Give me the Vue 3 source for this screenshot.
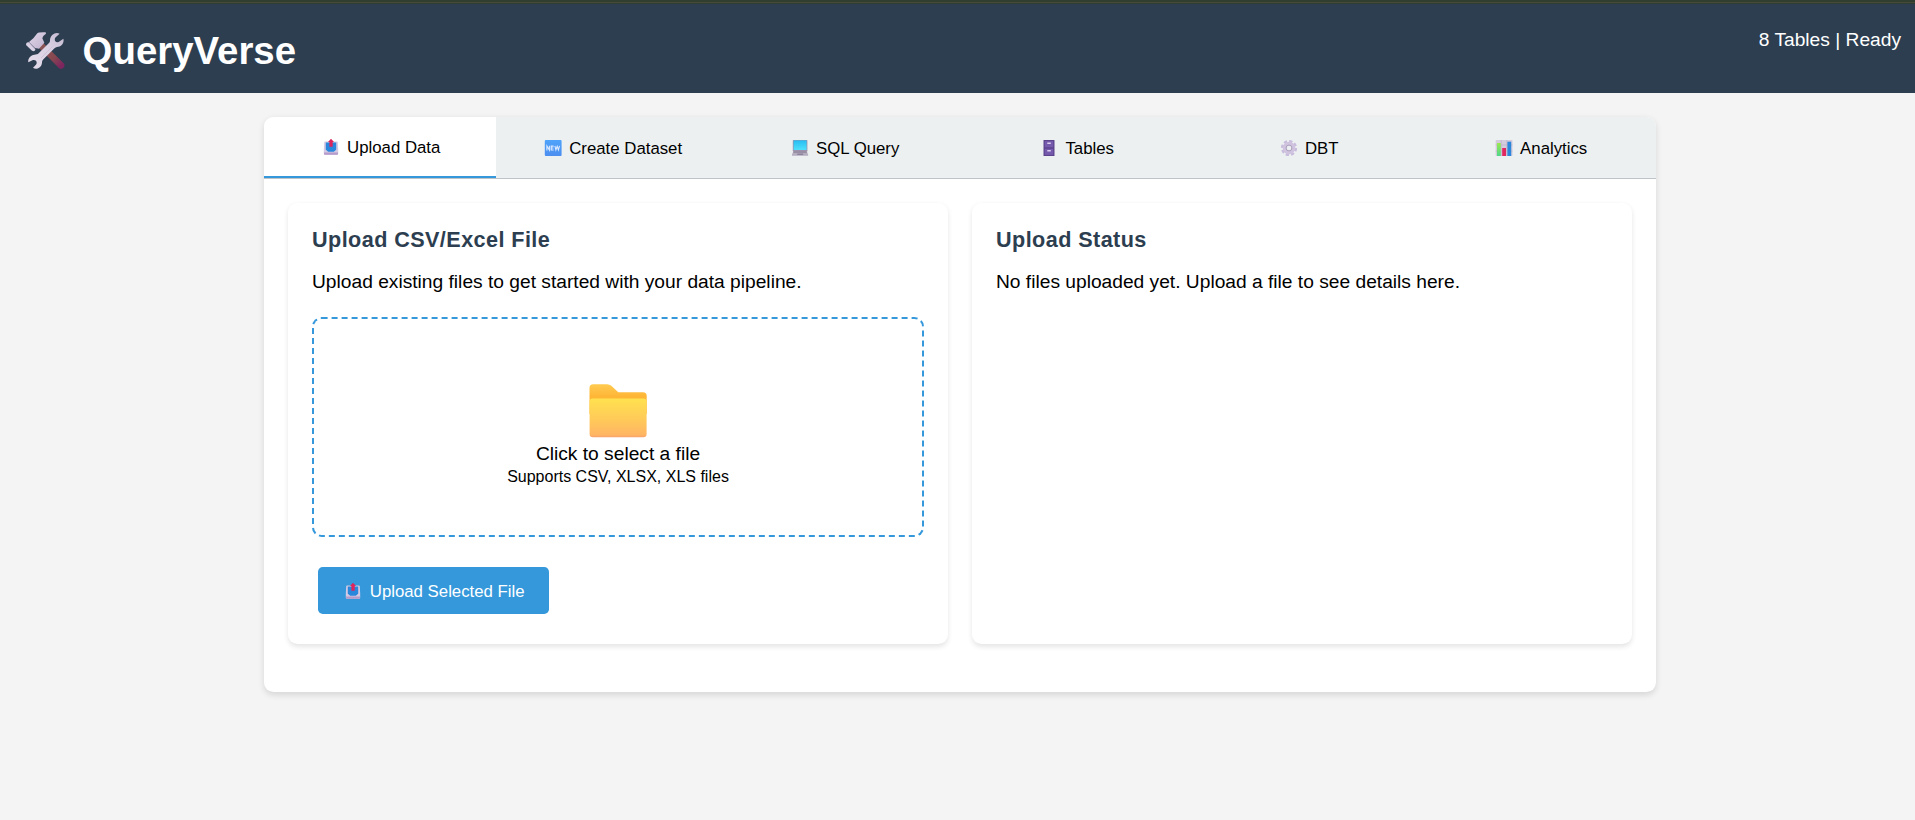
<script setup>
import { ref } from 'vue'

const tabs = [
  { id: 'upload', label: 'Upload Data' },
  { id: 'create', label: 'Create Dataset' },
  { id: 'sql', label: 'SQL Query' },
  { id: 'tables', label: 'Tables' },
  { id: 'dbt', label: 'DBT' },
  { id: 'analytics', label: 'Analytics' }
]
const active = ref('upload')
</script>

<template>
  <div class="page">
    <svg class="defs" width="0" height="0" aria-hidden="true">
      <defs>
        <linearGradient id="metal" x1="0" y1="0" x2="1" y2="1">
          <stop offset="0" stop-color="#e0d7e8" /><stop offset="1" stop-color="#bfb0cd" />
        </linearGradient>
        <linearGradient id="wrench" x1="1" y1="0" x2="0" y2="1">
          <stop offset="0" stop-color="#c3b8cf" /><stop offset=".4" stop-color="#d9d0e2" /><stop offset="1" stop-color="#e4dbea" />
        </linearGradient>
        <linearGradient id="wood" gradientUnits="userSpaceOnUse" x1="80" y1="78" x2="139" y2="138">
          <stop offset="0" stop-color="#8b5554" /><stop offset=".6" stop-color="#874850" /><stop offset="1" stop-color="#7d255e" />
        </linearGradient>
        <linearGradient id="back" x1="0" y1="0" x2="0" y2="1">
          <stop offset="0" stop-color="#ffcb51" /><stop offset=".4" stop-color="#ffb637" />
        </linearGradient>
        <linearGradient id="front" x1="0" y1="0" x2="0" y2="1">
          <stop offset="0" stop-color="#ffe14f" /><stop offset=".5" stop-color="#ffcc58" /><stop offset=".94" stop-color="#ffb563" /><stop offset="1" stop-color="#f8a06c" />
        </linearGradient>
        <linearGradient id="newbg" x1="0" y1="0" x2="0" y2="1">
          <stop offset="0" stop-color="#4fa3fa" /><stop offset="1" stop-color="#4c8ef0" />
        </linearGradient>
        <linearGradient id="screen" x1="0" y1="0" x2="0" y2="1">
          <stop offset="0" stop-color="#27bdf2" /><stop offset="1" stop-color="#4fe0fb" />
        </linearGradient>
        <linearGradient id="greenbar" x1="0" y1="0" x2="0" y2="1">
          <stop offset="0" stop-color="#9be84e" /><stop offset="1" stop-color="#4fd68c" />
        </linearGradient>
        <symbol id="outbox" viewBox="0 0 22 18">
          <path d="M5 3.6h12a.8.8 0 0 1 .8.7l.4 7.2v4.2a1 1 0 0 1-1 1H4.8a1 1 0 0 1-1-1v-4.2l.4-7.2a.8.8 0 0 1 .8-.7Z" fill="#d5cae3" />
          <path d="M5.8 4.6h10.4v7.2l-2.4 2H8.2l-2.4-2Z" fill="#2b87dc" />
          <path d="M4 14.4h14v1.4a.9.9 0 0 1-.9.9H4.9a.9.9 0 0 1-.9-.9Z" fill="#b69ccb" />
          <path d="M11 .7 14 4h-1.3v4.8H9.4V4H8Z" fill="#dd245c" />
        </symbol>
      </defs>
    </svg>

    <div class="strip"></div>
    <header class="header">
      <h1 class="brand">
        <svg class="tools" width="40" height="40" viewBox="30 30 120 120">
          <path d="M80 78 138 136" stroke="url(#wood)" stroke-width="20" stroke-linecap="round" />
          <path d="M67 40Q71 36 92 37L93 41Q83 47 82 55L88 68 72 86 60 84 42 66 55 55Z" fill="url(#metal)" />
          <path d="M34 70Q37 65 42 67L61 87Q62 93 56 94L51 92 33 75Z" fill="#d9d0e3" />
          <path d="m43 67 18 21" stroke="#a395b5" stroke-width="2" />
          <path d="M134 41C122 34 106 44 105 60 105 64 105 66 102 69L71 100C68 104 64 103 58 104 46 106 38 116 40 127L54 120Q61 119 64 124 67 132 62 135L54 143C65 151 80 142 81 128 81 123 83 120 86 117L117 86C120 82 124 81 130 80 142 78 148 66 145 56L131 66Q123 68 120 62 118 56 122 52Z" fill="url(#wrench)" />
          <path d="m78 114 34-34" stroke="#bdb1cb" stroke-width="3" opacity=".5" />
        </svg>
        <span>QueryVerse</span>
      </h1>
      <div class="status">8 Tables | Ready</div>
    </header>

    <main class="container">
      <nav class="tabs">
        <button
          v-for="tab in tabs"
          :key="tab.id"
          class="tab"
          :class="{ active: active === tab.id }"
          @click="active = tab.id"
        >
          <svg class="icon" width="22" height="18" viewBox="0 0 22 18">
            <use v-if="tab.id === 'upload'" href="#outbox" width="22" height="18" />
            <g v-else-if="tab.id === 'create'">
              <rect x="2.8" y="1" width="16.8" height="16" rx="1" fill="url(#newbg)" />
              <path d="M4.9 11.4V7l2.5 4V6.8M11.6 7.1H9.2v3.9h2.4M9.2 9h2.2M12.9 6.8l1 4 1.3-3.4 1.2 3.4 1.1-4" fill="none" stroke="#dceaff" stroke-width="1.1" />
            </g>
            <g v-else-if="tab.id === 'sql'">
              <rect x="3.8" y="1" width="14.6" height="11.8" rx=".7" fill="#9d91ad" />
              <rect x="4.6" y="1.4" width="13" height="9.6" fill="url(#screen)" />
              <path d="M4.5 12h13.2l1.4 3.6v1.2H3v-1.2Z" fill="#b5adc0" />
              <path d="M4.7 12.5h12.8l.4 1H4.3Z" fill="#7c7288" />
              <path d="M8.5 14.6h5.5l.4 1.5H8Z" fill="#8d829c" />
            </g>
            <g v-else-if="tab.id === 'tables'">
              <rect x="5.5" y="1" width="11" height="16" rx=".6" fill="#5c438c" />
              <rect x="6.7" y="2.1" width="8.6" height="6.2" fill="#7459ac" />
              <rect x="6.7" y="9.7" width="8.6" height="6.2" fill="#7459ac" />
              <path d="M9.3 4.3h3.5M9.3 11.8h3.5" stroke="#dccdf0" stroke-width="1.5" />
            </g>
            <g v-else-if="tab.id === 'dbt'">
              <circle cx="11" cy="9" r="6.8" fill="none" stroke="#c8bbdc" stroke-width="2.6" stroke-dasharray="3.2 2.14" />
              <circle cx="11" cy="9" r="4.6" fill="none" stroke="#cfc3df" stroke-width="3.4" />
              <circle cx="11" cy="9" r="2.9" fill="#edf0f2" stroke="#a99bb9" stroke-width="1" />
            </g>
            <g v-else>
              <rect x="2.7" y="1" width="16.8" height="16" rx=".8" fill="#d4cbdd" />
              <path d="M8.2 1v16M13.8 1v16M2.7 6h16.8M2.7 12h16.8" stroke="#b9afc6" stroke-width=".6" />
              <rect x="4" y="4" width="3.8" height="13" fill="url(#greenbar)" />
              <rect x="9.2" y="9" width="3.8" height="8" fill="#e0275f" />
              <rect x="14.4" y="2.7" width="3.8" height="14.3" fill="#2c86d9" />
            </g>
          </svg>
          <span class="label">{{ tab.label }}</span>
        </button>
      </nav>

      <section class="panel">
        <article class="card">
          <h3>Upload CSV/Excel File</h3>
          <p>Upload existing files to get started with your data pipeline.</p>
          <div class="dropzone">
            <svg class="folder" width="58" height="54" viewBox="0 0 58 54">
              <path d="M.5 4Q.5.3 4.2.3H18Q20.5.3 22.3 1.8L29.3 8.3H54Q57.7 8.3 57.7 12V30H.5Z" fill="url(#back)" />
              <path d="M.6 17.5Q.6 14.5 3.6 14.5H54.6Q57.6 14.5 57.6 17.5V50Q57.6 53.2 54.2 53.2H4Q.6 53.2 .6 50Z" fill="url(#front)" />
            </svg>
            <div class="prompt">Click to select a file</div>
            <small>Supports CSV, XLSX, XLS files</small>
          </div>
          <button class="submit">
            <svg class="icon" width="22" height="18" viewBox="0 0 22 18">
              <use href="#outbox" width="22" height="18" />
            </svg>
            <span class="label">Upload Selected File</span>
          </button>
        </article>
        <article class="card">
          <h3>Upload Status</h3>
          <p>No files uploaded yet. Upload a file to see details here.</p>
        </article>
      </section>
    </main>
  </div>
</template>

<style>
body {
  background: #f4f4f4;
}
</style>

<style scoped>
.page {
  min-height: 820px;
  font-family: "Liberation Sans", Arial, sans-serif;
  font-size: 19.2px;
  color: #000;
}
.page * {
  box-sizing: border-box;
}
.defs {
  display: block;
}
.strip {
  height: 4px;
  background: linear-gradient(#2f3e2e 0 2px, #474a38 2px 3px, #2f3e35 3px 4px);
}
.header {
  display: flex;
  justify-content: space-between;
  align-items: flex-start;
  height: 89px;
  padding: 25px 14px 0 25px;
  background: #2c3e50;
  color: #fff;
}
.brand {
  display: flex;
  margin: 0;
  font-size: 38.4px;
  line-height: 44px;
}
.tools {
  margin: 1px 17.6px 0 0;
  fill: none;
}
.status {
  line-height: 22px;
}
.container {
  width: 1392px;
  height: 575px;
  margin: 24px 0 0 264px;
  border-radius: 9.6px;
  background: #fff;
  box-shadow: 0 2.4px 6px rgba(0, 0, 0, 0.12);
  overflow: hidden;
}
.tabs {
  display: flex;
  height: 62px;
  background: #ecf0f1;
  border-bottom: 1px solid #bdc3c7;
}
.tab,
.submit {
  display: flex;
  align-items: center;
  justify-content: center;
  border: 0;
  font-family: inherit;
  font-size: 16.8px;
  line-height: 19px;
}
.tab {
  flex: 1;
  padding: 0;
  background: transparent;
  color: #000;
}
.tab.active {
  background: #fff;
  border-bottom: 2px solid #3498db;
}
.icon {
  margin-right: 5.4px;
  flex: none;
}
.label {
  padding-top: 2px;
}
.panel {
  display: grid;
  grid-template-columns: 1fr 1fr;
  gap: 24px;
  padding: 24px;
}
.card {
  height: 441px;
  padding: 24px;
  border-radius: 9.6px;
  background: #fff;
  box-shadow: 0 2.4px 4.8px rgba(0, 0, 0, 0.1);
}
.card h3 {
  margin: 0 0 19px;
  font-size: 21.6px;
  line-height: 25px;
  letter-spacing: 0.43px;
  color: #2c3e50;
}
.card p {
  margin: 0;
  line-height: 22px;
}
.dropzone {
  display: flex;
  flex-direction: column;
  align-items: center;
  height: 220px;
  margin-top: 24px;
  padding-top: 65px;
  border: 2px dashed #3498db;
  border-radius: 9.6px;
}
.prompt {
  margin-top: 5px;
  line-height: 22px;
}
.dropzone small {
  margin-top: 3px;
  font-size: 16px;
  line-height: 18px;
}
.submit {
  width: 231px;
  height: 47px;
  margin: 30px 6px 6px;
  padding: 0;
  border-radius: 4.8px;
  background: #3498db;
  color: #fff;
}
</style>
